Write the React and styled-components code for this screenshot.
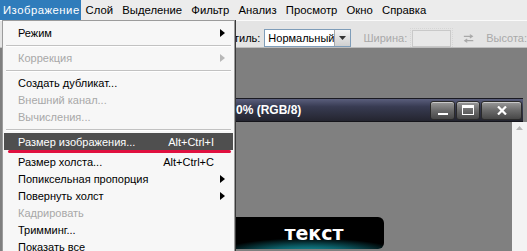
import styled, { createGlobalStyle } from "styled-components";

const GlobalStyle = createGlobalStyle`
  html, body {
    margin: 0;
    padding: 0;
    width: 527px;
    height: 251px;
    overflow: hidden;
    background: #7f7f7f;
  }
  #root {
    width: 527px;
    height: 251px;
  }
  * {
    box-sizing: border-box;
  }
`;

const Screen = styled.div`
  position: relative;
  width: 527px;
  height: 251px;
  display: flex;
  flex-direction: column;
  font-family: "Liberation Sans", Arial, sans-serif;
  overflow: hidden;
`;

const MenuBar = styled.div`
  height: 20px;
  display: flex;
  align-items: stretch;
  background: #ececec;
  font-size: 11.3px;
  color: #000;
`;

const MenuTitle = styled.div`
  display: flex;
  align-items: center;
  padding: 0 4.6px;
  background: ${(p) => (p.$open ? "#2f7cbb" : "transparent")};
  color: ${(p) => (p.$open ? "#fff" : "#000")};
  ${(p) => p.$open && "width: 81px; padding: 0 0 0 3px; letter-spacing: 0.5px;"}
`;

const Toolbar = styled.div`
  height: 28px;
  display: flex;
  align-items: center;
  padding: 8px 0 0 226px;
  background: #e4e4e4;
  border-top: 1px solid #fafafa;
  border-bottom: 1px solid #bdbdbd;
  font-size: 11px;
  color: #000;
`;

const Label = styled.span`
  color: ${(p) => (p.$disabled ? "#a9a9a9" : "#000")};
  margin-right: ${(p) => p.$mr || 0}px;
`;

const Select = styled.div`
  width: 96px;
  height: 18px;
  display: flex;
  border: 1px solid #7f9db9;
  background: #fff;
`;

const SelectText = styled.div`
  flex: 1;
  display: flex;
  align-items: center;
  padding-left: 3px;
  font-size: 11px;
`;

const SelectButton = styled.div`
  width: 16px;
  display: flex;
  align-items: center;
  justify-content: center;
  background: linear-gradient(#f4f4f4, #cfcfcf);
  border-left: 1px solid #a8a8a8;
`;

const Field = styled.div`
  width: 45px;
  height: 17px;
  margin: 0 12px 0 5px;
  border: 1px solid #c9c9c9;
  outline: 1px dotted #d6d6d6;
  outline-offset: 1px;
  background: #e8e8e8;
`;

const Workspace = styled.div`
  flex: 1;
  display: flex;
  padding: 50px 4px 0 234px;
  background: #7f7f7f;
`;

const DocWindow = styled.div`
  flex: 1;
  display: flex;
  flex-direction: column;
`;

const TitleBar = styled.div`
  height: 24px;
  display: flex;
  align-items: center;
  padding: 0 1px 0 2px;
  background: linear-gradient(#5a5e7c 0%, #383b52 35%, #24252f 100%);
  border-top: 1px solid #1a1a22;
  border-bottom: 1px solid #15151b;
  color: #fff;
  font-weight: bold;
  font-size: 12px;
`;

const TitleText = styled.span`
  flex: 1;
`;

const WinButton = styled.div`
  width: ${(p) => p.$w}px;
  height: 19px;
  margin-left: 1px;
  display: flex;
  align-items: center;
  justify-content: center;
  border: 1px solid #2a2a2a;
  border-radius: 3px;
  background: linear-gradient(#9a9a9a, #6a6a6a 50%, #474747);
  box-shadow: inset 0 1px 0 #c8c8c8;
`;

const DocBody = styled.div`
  flex: 1;
  display: flex;
`;

const Canvas = styled.div`
  flex: 1;
  display: flex;
  align-items: flex-start;
  padding-top: 95px;
  background: #808080;
`;

const TextLayer = styled.div`
  width: 150px;
  height: 32px;
  display: flex;
  align-items: center;
  justify-content: center;
  padding-left: 10px;
  border-radius: 0 6px 6px 0;
  background: radial-gradient(ellipse 75% 60% at 50% 115%, #1aa5b0 0%, #0b5a63 42%, #000 82%);
  color: #fff;
  font-family: "DejaVu Sans", sans-serif;
  font-weight: bold;
  font-size: 19px;
`;

const ScrollBar = styled.div`
  width: 15px;
  margin-right: -4px;
  display: flex;
  justify-content: center;
  padding-top: 4px;
  background: #f3f3f3;
`;

const Dropdown = styled.div`
  position: absolute;
  left: 2px;
  top: 20px;
  width: 233px;
  padding: 3px 1px 0 1px;
  background: #f7f7f7;
  border: 1px solid #9c9c9c;
  border-bottom: none;
  font-size: 11px;
  box-shadow: 1px 0 0 #3a3a3a;
`;

const Item = styled.div`
  height: 17px;
  display: flex;
  align-items: center;
  padding: 0 8px 0 14px;
  background: ${(p) => (p.$active ? "#4f4f4f" : "transparent")};
  color: ${(p) => (p.$active ? "#fff" : p.$disabled ? "#a8a8a8" : "#000")};
`;

const ItemLabel = styled.span`
  flex: 1;
`;

const Shortcut = styled.span`
  margin-right: 11px;
`;

const Separator = styled.div`
  height: 8px;
  display: flex;
  align-items: center;
  padding: 0 2px;

  &::before {
    content: "";
    flex: 1;
    height: 1px;
    background: #c2c2c2;
    box-shadow: 0 1px 0 #fff;
  }
`;

const RedLine = styled.div`
  height: 3px;
  margin: 0 2px 0 4px;
  background: #e0103f;
  border-radius: 2px;
`;

const Arrow = ({ disabled }) => (
  <svg width="5" height="8" viewBox="0 0 5 8">
    <path d="M0 0 L5 4 L0 8 Z" fill={disabled ? "#b8b8b8" : "#000"} />
  </svg>
);

const menuBarItems = [
  ["Изображение", true],
  ["Слой", false],
  ["Выделение", false],
  ["Фильтр", false],
  ["Анализ", false],
  ["Просмотр", false],
  ["Окно", false],
  ["Справка", false],
];

export default function App() {
  return (
    <>
      <GlobalStyle />
      <Screen>
        <MenuBar>
          {menuBarItems.map(([name, open]) => (
            <MenuTitle key={name} $open={open}>
              {name}
            </MenuTitle>
          ))}
        </MenuBar>

        <Toolbar>
          <Label $mr={4}>Стиль:</Label>
          <Select>
            <SelectText>Нормальный</SelectText>
            <SelectButton>
              <svg width="7" height="4" viewBox="0 0 7 4">
                <path d="M0 0 L7 0 L3.5 4 Z" fill="#333" />
              </svg>
            </SelectButton>
          </Select>
          <Label $disabled style={{ marginLeft: 12 }}>
            Ширина:
          </Label>
          <Field />
          <svg width="13" height="11" viewBox="0 0 13 11">
            <path d="M1 3 H10 M8 1 L11 3 L8 5" stroke="#a8a8a8" strokeWidth="1.3" fill="none" />
            <path d="M12 8 H3 M5 6 L2 8 L5 10" stroke="#a8a8a8" strokeWidth="1.3" fill="none" />
          </svg>
          <Label $disabled style={{ marginLeft: 12 }}>
            Высота:
          </Label>
        </Toolbar>

        <Workspace>
          <DocWindow>
            <TitleBar>
              <TitleText>0% (RGB/8)</TitleText>
              <WinButton $w={25}>
                <svg width="12" height="12" viewBox="0 0 12 12">
                  <rect x="1" y="9" width="10" height="2" fill="#fff" />
                </svg>
              </WinButton>
              <WinButton $w={24}>
                <svg width="12" height="10" viewBox="0 0 12 10">
                  <rect x="0.5" y="0.5" width="11" height="9" fill="none" stroke="#fff" />
                  <rect x="1" y="1" width="10" height="2" fill="#fff" />
                </svg>
              </WinButton>
              <WinButton $w={41}>
                <svg width="10" height="9" viewBox="0 0 10 9">
                  <path d="M1 0.5 L9 8.5 M9 0.5 L1 8.5" stroke="#fff" strokeWidth="2.2" />
                </svg>
              </WinButton>
            </TitleBar>
            <DocBody>
              <Canvas>
                <TextLayer>текст</TextLayer>
              </Canvas>
              <ScrollBar>
                <svg width="7" height="4" viewBox="0 0 7 4">
                  <path d="M0 4 L3.5 0 L7 4 Z" fill="#b8b8b8" />
                </svg>
              </ScrollBar>
            </DocBody>
          </DocWindow>
        </Workspace>

        <Dropdown>
          <Item>
            <ItemLabel>Режим</ItemLabel>
            <Arrow />
          </Item>
          <Separator />
          <Item $disabled>
            <ItemLabel>Коррекция</ItemLabel>
            <Arrow disabled />
          </Item>
          <Separator />
          <Item>
            <ItemLabel>Создать дубликат...</ItemLabel>
          </Item>
          <Item $disabled>
            <ItemLabel>Внешний канал...</ItemLabel>
          </Item>
          <Item $disabled>
            <ItemLabel>Вычисления...</ItemLabel>
          </Item>
          <Separator />
          <Item $active>
            <ItemLabel>Размер изображения...</ItemLabel>
            <Shortcut>Alt+Ctrl+I</Shortcut>
          </Item>
          <RedLine />
          <Item>
            <ItemLabel>Размер холста...</ItemLabel>
            <Shortcut>Alt+Ctrl+C</Shortcut>
          </Item>
          <Item>
            <ItemLabel>Попиксельная пропорция</ItemLabel>
            <Arrow />
          </Item>
          <Item>
            <ItemLabel>Повернуть холст</ItemLabel>
            <Arrow />
          </Item>
          <Item $disabled>
            <ItemLabel>Кадрировать</ItemLabel>
          </Item>
          <Item>
            <ItemLabel>Тримминг...</ItemLabel>
          </Item>
          <Item>
            <ItemLabel>Показать все</ItemLabel>
          </Item>
        </Dropdown>
      </Screen>
    </>
  );
}
